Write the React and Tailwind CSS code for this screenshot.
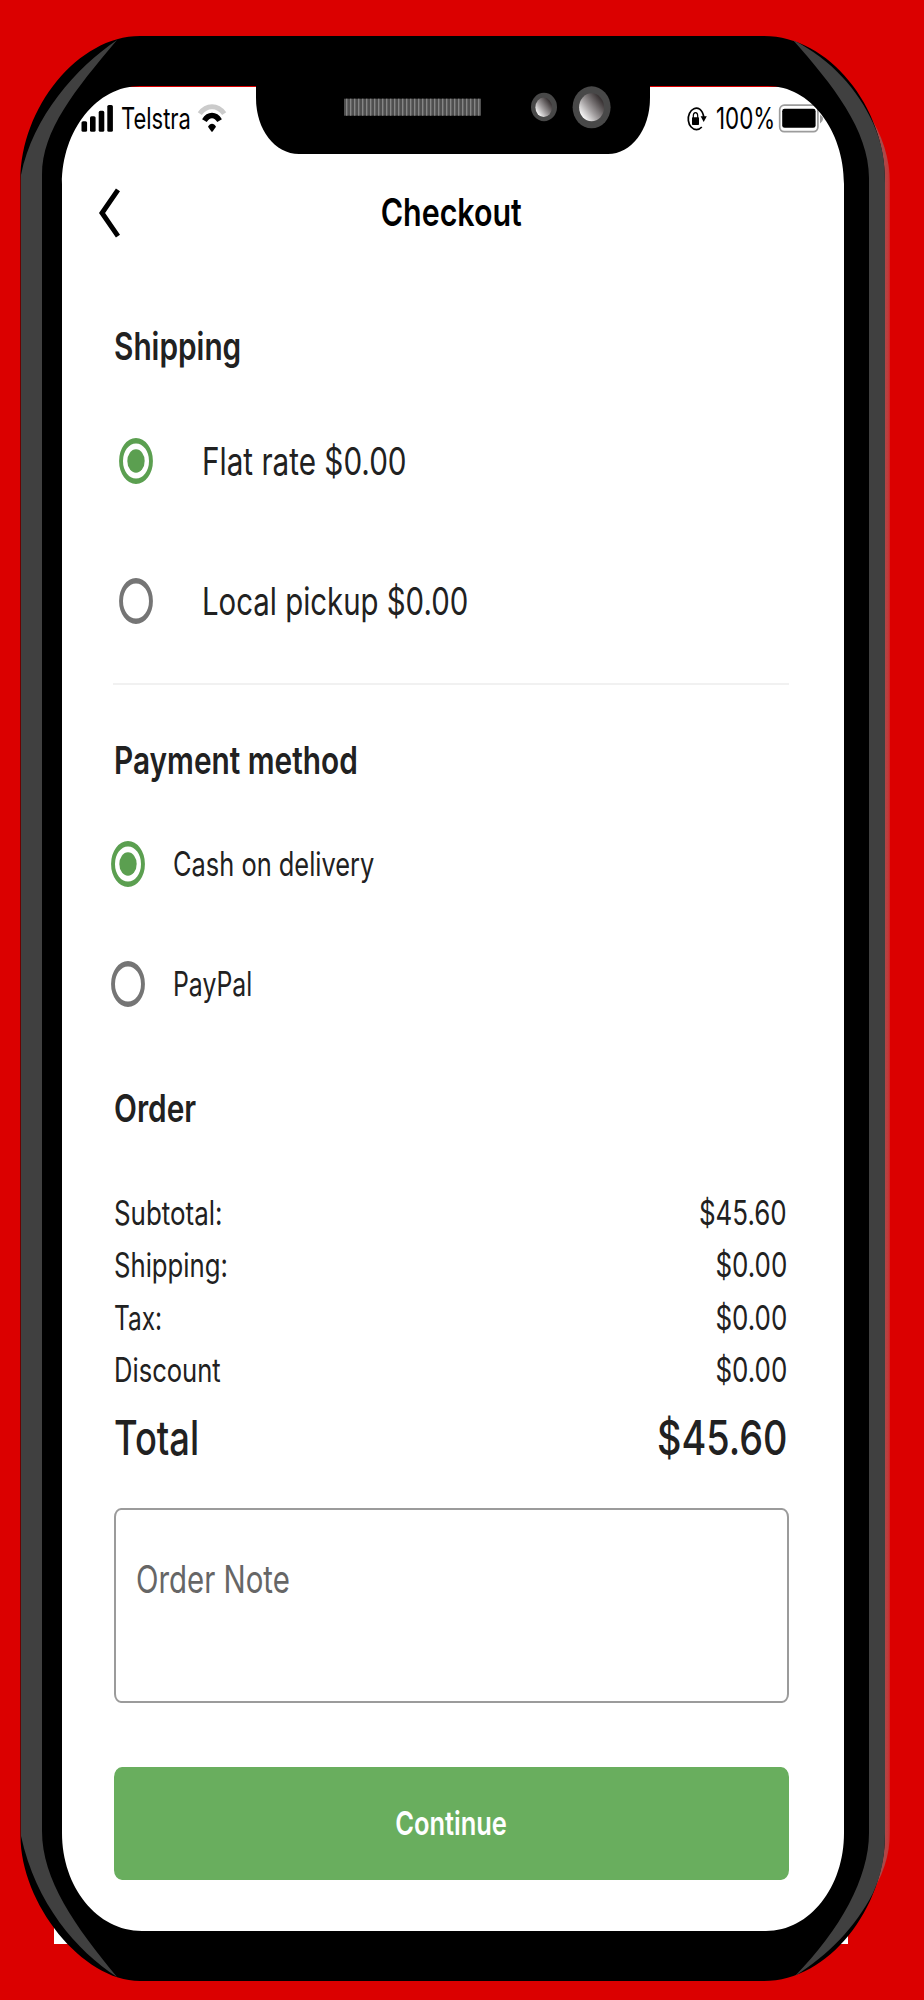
import React, { useState } from 'react';

const shippingOptions = [
  { id: 'flat', label: 'Flat rate $0.00', scale: 'scale-x-[0.781]' },
  { id: 'pickup', label: 'Local pickup $0.00', scale: 'scale-x-[0.773]' },
];

const paymentOptions = [
  { id: 'cod', label: 'Cash on delivery', scale: 'scale-x-[0.763]' },
  { id: 'paypal', label: 'PayPal', scale: 'scale-x-[0.745]' },
];

const orderRows = [
  { label: 'Subtotal:', value: '$45.60', scale: 'scale-x-[0.778]' },
  { label: 'Shipping:', value: '$0.00', scale: 'scale-x-[0.771]' },
  { label: 'Tax:', value: '$0.00', scale: 'scale-x-[0.735]' },
  { label: 'Discount', value: '$0.00', scale: 'scale-x-[0.768]' },
];

// condensed text, the caller picks the anchor side
const Text = ({ className = '', children }) => (
  <span className={`inline-block whitespace-nowrap ${className}`}>{children}</span>
);

const Heading = ({ className = '', children }) => (
  <h2 className={`flex h-14 items-center text-[38px] font-semibold ${className}`}>
    <Text className="origin-left scale-x-[0.784]">{children}</Text>
  </h2>
);

const Radio = ({ checked }) => (
  <svg
    viewBox="0 0 20 20"
    preserveAspectRatio="none"
    className={`h-[46px] w-[34px] shrink-0 ${checked ? 'text-[#5b9f50]' : 'text-[#757575]'}`}
  >
    <circle cx="10" cy="10" r="8.8" fill="none" stroke="currentColor" strokeWidth="2.3" />
    {checked && <circle cx="10" cy="10" r="5.1" fill="currentColor" />}
  </svg>
);

const StatusBar = () => (
  <div className="flex h-[63px] shrink-0 items-center pr-6 pl-[27px] text-[29.5px] text-black">
    <svg viewBox="0 0 33 28" className="h-7 w-[33px]">
      <rect x="0.5" y="16.2" width="5.6" height="10.6" rx="1.6" />
      <rect x="9" y="11.2" width="5.6" height="15.6" rx="1.6" />
      <rect x="17.7" y="5.8" width="5.6" height="21" rx="1.6" />
      <rect x="26.3" y="0" width="5.6" height="26.8" rx="1.6" />
    </svg>
    <div className="ml-[7px] w-[70px]">
      <Text className="origin-left scale-x-[0.744]">Telstra</Text>
    </div>
    <svg viewBox="0 0 28 28" className="ml-[7px] h-7 w-7 overflow-visible" fill="none">
      <path d="M1.8 8.6C8.5 -0.6 19.5 -0.6 26.2 8.6" stroke="#cbcbcb" strokeWidth="5" />
      <path d="M6.4 15.6C10.6 8.8 17.4 8.8 21.6 15.6" stroke="#000" strokeWidth="5.4" />
      <path d="M10 21.8C12 17.8 16 17.8 18 21.8L14.8 26.2Q14 27.2 13.2 26.2Z" fill="#000" />
    </svg>
    <div className="ml-auto flex items-center">
      <svg viewBox="0 0 21 26" className="h-[26px] w-[21px]" fill="none">
        <path d="M13.6 3A8.2 10.7 0 1 0 15.8 21" stroke="#000" strokeWidth="1.7" />
        <path d="M13.4 2.9Q17.2 5.8 17.7 11.4" stroke="#000" strokeWidth="1.7" />
        <path d="M14.6 10.2H20.8L17.7 16Z" fill="#000" />
        <rect x="6" y="11.2" width="7" height="7.8" rx="0.8" fill="#000" />
        <path d="M7.3 12V9.8Q7.3 6.6 9.5 6.6Q11.7 6.6 11.7 9.8V12" stroke="#000" strokeWidth="1.2" />
      </svg>
      <div className="ml-[9px] w-[58px]">
        <Text className="origin-left scale-x-[0.759]">100%</Text>
      </div>
      <svg viewBox="0 0 46 30" className="ml-1 h-[30px] w-[46px]" fill="none">
        <rect x="1.7" y="1.2" width="38.2" height="26.4" rx="4.5" stroke="#9c9c9c" strokeWidth="1.7" />
        <rect x="4.2" y="4.8" width="33.4" height="19" rx="2.4" fill="#000" />
        <path d="M42 10.4Q45 12.4 45 15Q45 17.6 42 19.6Z" fill="#9c9c9c" />
      </svg>
    </div>
  </div>
);

const stripes = Array.from({ length: 34 }, (_, i) => 346 + i * 4);

const PhoneFrame = () => (
  <svg viewBox="0 0 924 2000" className="pointer-events-none absolute inset-0 h-full w-full">
    <defs>
      <linearGradient id="lens" x1="0.1" y1="0.85" x2="0.85" y2="0.2">
        <stop offset="0" stopColor="#fff" />
        <stop offset="0.45" stopColor="#a19d9e" />
        <stop offset="1" stopColor="#3a3435" />
      </linearGradient>
      <linearGradient id="edge" gradientUnits="userSpaceOnUse" x1="884" y1="0" x2="891" y2="0">
        <stop offset="0" stopColor="#a84a4a" />
        <stop offset="0.6" stopColor="#c23a3a" />
        <stop offset="1" stopColor="#d81010" />
      </linearGradient>
    </defs>
    <path d="M866 110C883 135 890 160 890 183V1832C890 1855 883 1877 866 1902Z" fill="url(#edge)" />
    {/* body with the screen cut out */}
    <path
      fillRule="evenodd"
      d="M140 36H764C829 36 885 107 885 180V1834C885 1908 829 1981 764 1981H140C82 1981 20.5 1903 20.5 1836V180C20.5 108 78 36 140 36Z
         M140 86C97 86 62 130 62 184V1833C62 1887 97 1931 142 1931H766C810 1931 844 1887 844 1833V184C844 130 810 86 768 86Z"
    />
    <g fill="#404040">
      <path d="M117 40C76 68 33 116 21 175V1836C36 1904 76 1950 117 1977C75 1926 42 1880 42 1831V175C42 130 75 90 117 40Z" />
      <path d="M793 40C832 60 858 90 873 123C882 143 885 160 885 183V1833C885 1858 881 1875 873 1893C855 1928 828 1955 795 1976C840 1930 869 1878 869 1833V178C869 130 832 84 793 40Z" />
    </g>
    <path d="M256 84V98C256 130 275 154 299 154H608C631 154 650 130 650 98V84Z" />
    <rect x="344" y="98.7" width="137" height="17" fill="#4f4f4f" />
    {stripes.map((x) => (
      <rect key={x} x={x} y="98.7" width="1.4" height="17" fill="#858585" />
    ))}
    <g fill="#484848">
      <ellipse cx="544" cy="107" rx="13" ry="14.2" />
      <ellipse cx="591.6" cy="107.3" rx="19" ry="21" />
    </g>
    <g fill="url(#lens)">
      <ellipse cx="543.7" cy="107.3" rx="8.3" ry="9.7" />
      <ellipse cx="591.6" cy="107.3" rx="12.5" ry="14" />
    </g>
  </svg>
);

const App = () => {
  const [shipping, setShipping] = useState('flat');
  const [payment, setPayment] = useState('cod');

  return (
    <div className="relative h-[2000px] w-[924px] overflow-hidden bg-[#db0000] pt-[87px] pl-[54px] font-[Inter,sans-serif] text-[#212121]">
      <div className="flex h-[1857px] w-[794px] flex-col rounded-t-3xl bg-white">
        <StatusBar />

        <header className="grid h-[125px] shrink-0 grid-cols-[1fr_auto_1fr] items-center px-[45px] text-black">
          <button aria-label="Back">
            <svg viewBox="0 0 21 50" className="h-[50px] w-[21px]" fill="none">
              <path d="M19 1.8L3 25L19 48.2" stroke="currentColor" strokeWidth="5" />
            </svg>
          </button>
          <h1 className="text-[38px] font-semibold">
            <Text className="scale-x-[0.8]">Checkout</Text>
          </h1>
        </header>

        <main className="flex flex-col pr-[59px] pl-[60px]">
          <Heading className="mt-[43px]">Shipping</Heading>
          <div className="mt-[17px]">
            {shippingOptions.map((option) => (
              <div
                key={option.id}
                onClick={() => setShipping(option.id)}
                className="flex h-[140px] items-center pl-[5px] text-[38px]"
              >
                <Radio checked={shipping === option.id} />
                <Text className={`ml-[48.5px] origin-left ${option.scale}`}>{option.label}</Text>
              </div>
            ))}
          </div>

          <hr className="-ml-px mt-3 h-0.5 border-0 bg-[#f1f1f1]" />

          <Heading className="mt-[47px]">Payment method</Heading>
          <div className="mt-4">
            {paymentOptions.map((option) => (
              <div
                key={option.id}
                onClick={() => setPayment(option.id)}
                className="-ml-[3px] flex h-[120px] items-center text-[33.3px]"
              >
                <Radio checked={payment === option.id} />
                <Text className={`ml-7 origin-left pt-px ${option.scale}`}>{option.label}</Text>
              </div>
            ))}
          </div>

          <Heading className="mt-9">Order</Heading>
          <div className="mt-[51.3px] pr-0.5 text-[33.3px]">
            {orderRows.map((row) => (
              <div key={row.label} className="flex h-[52.6px] items-center justify-between">
                <Text className={`origin-left ${row.scale}`}>{row.label}</Text>
                <Text className="origin-right scale-x-[0.778]">{row.value}</Text>
              </div>
            ))}
            <div className="flex h-[81.3px] items-center justify-between text-[48px] font-medium">
              <Text className="origin-left scale-x-[0.757]">Total</Text>
              <Text className="origin-right scale-x-[0.788]">$45.60</Text>
            </div>
          </div>

          <div className="mt-[29px] h-[195px] rounded-[7px/9px] border-2 border-[#9b9b9b] pt-[42px] pl-5">
            <div className="flex h-14 items-center text-[38px] text-[#666]">
              <Text className="origin-left scale-x-[0.774]">Order Note</Text>
            </div>
          </div>

          <button className="mt-16 h-[113px] rounded-[8px/10px] bg-[#69ae5e] text-[33.3px] font-semibold text-white">
            <Text className="scale-x-[0.765]">Continue</Text>
          </button>
        </main>
      </div>

      <PhoneFrame />
    </div>
  );
};

export default App;
